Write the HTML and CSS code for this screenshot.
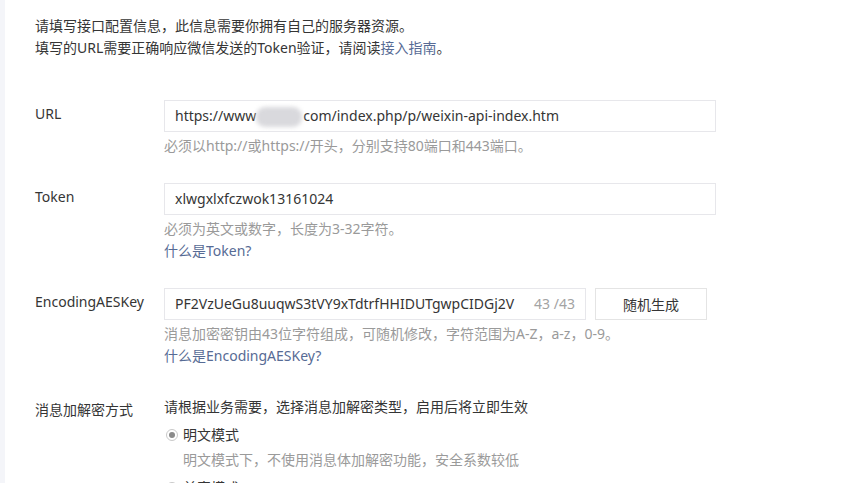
FILE: index.html
```html
<!DOCTYPE html>
<html lang="zh-CN">
<head>
    <meta charset="UTF-8">
    <title>服务器配置</title>
    <link rel="stylesheet" href="styles.css">
</head>
<body>
    <div class="page">
        <div class="intro">
            <p>请填写接口配置信息，此信息需要你拥有自己的服务器资源。</p>
            <p>填写的URL需要正确响应微信发送的Token验证，请阅读<a href="#">接入指南</a>。</p>
        </div>

        <div class="form-row">
            <label class="form-label">URL</label>
            <div class="form-body">
                <div class="input-box wide">https://www<span class="masked"></span>com/index.php/p/weixin-api-index.htm</div>
                <p class="tips">必须以http://或https://开头，分别支持80端口和443端口。</p>
            </div>
        </div>

        <div class="form-row">
            <label class="form-label">Token</label>
            <div class="form-body">
                <div class="input-box wide">xlwgxlxfczwok13161024</div>
                <p class="tips">必须为英文或数字，长度为3-32字符。</p>
                <a class="tips-link" href="#">什么是Token?</a>
            </div>
        </div>

        <div class="form-row">
            <label class="form-label">EncodingAESKey</label>
            <div class="form-body">
                <div class="input-line">
                    <div class="input-box key">
                        <span>PF2VzUeGu8uuqwS3tVY9xTdtrfHHIDUTgwpCIDGj2V</span>
                        <span class="counter">43 /43</span>
                    </div>
                    <button class="btn">随机生成</button>
                </div>
                <p class="tips">消息加密密钥由43位字符组成，可随机修改，字符范围为A-Z，a-z，0-9。</p>
                <a class="tips-link" href="#">什么是EncodingAESKey?</a>
            </div>
        </div>

        <div class="form-row mode-row">
            <label class="form-label">消息加解密方式</label>
            <div class="form-body">
                <p class="mode-desc">请根据业务需要，选择消息加解密类型，启用后将立即生效</p>
                <div class="radio-item">
                    <span class="radio checked"></span>
                    <span>明文模式</span>
                </div>
                <p class="tips radio-tips">明文模式下，不使用消息体加解密功能，安全系数较低</p>
                <div class="radio-item">
                    <span class="radio"></span>
                    <span>兼容模式</span>
                </div>
            </div>
        </div>
    </div>
</body>
</html>
```

FILE: styles.css
```css
* { margin: 0; padding: 0; box-sizing: border-box; }
body { font-family: "Noto Sans", "Noto Sans CJK SC", sans-serif; font-size: 14px; color: #353535; background: #fff; }
a { color: #576b95; text-decoration: none; }
.page { border-left: 5px solid #f4f5f9; min-height: 483px; padding: 15px 0 0 30px; }
.intro p { line-height: 22px; }
.intro { margin-bottom: 41px; }
.form-row { display: flex; margin-bottom: 26px; }
.form-label { width: 129px; flex-shrink: 0; line-height: 28px; }
.form-body { flex: 1; }
.input-box { height: 32px; border: 1px solid #e7e7eb; padding: 0 10px; line-height: 30px; white-space: nowrap; overflow: hidden; }
.input-box.wide { width: 552px; }
.input-box.key { width: 422px; display: flex; justify-content: space-between; }
.input-line { display: flex; gap: 9px; }
.counter { color: #a3a3a3; }
.masked { display: inline-block; width: 46px; height: 20px; vertical-align: middle; margin: 0 1px 0 0; background: #d9d9dd; border-radius: 9px; filter: blur(2px); }
.btn { width: 112px; height: 32px; border: 1px solid #e4e4e4; background: #fff; font: inherit; color: #353535; }
.tips { color: #9a9a9a; line-height: 22px; margin-top: 3px; }
.tips-link { display: block; line-height: 22px; }
.mode-row { margin-top: 29px; }
.mode-desc { line-height: 22px; }
.radio-item { display: flex; align-items: center; gap: 5px; line-height: 22px; margin-top: 6px; padding-left: 2px; }
.radio { width: 12px; height: 12px; border: 1px solid #c9c9c9; border-radius: 50%; display: flex; align-items: center; justify-content: center; }
.radio.checked::after { content: ''; width: 6px; height: 6px; border-radius: 50%; background: #8a8a8a; }
.radio-tips { margin: 3px 0 0 19px; }
```
